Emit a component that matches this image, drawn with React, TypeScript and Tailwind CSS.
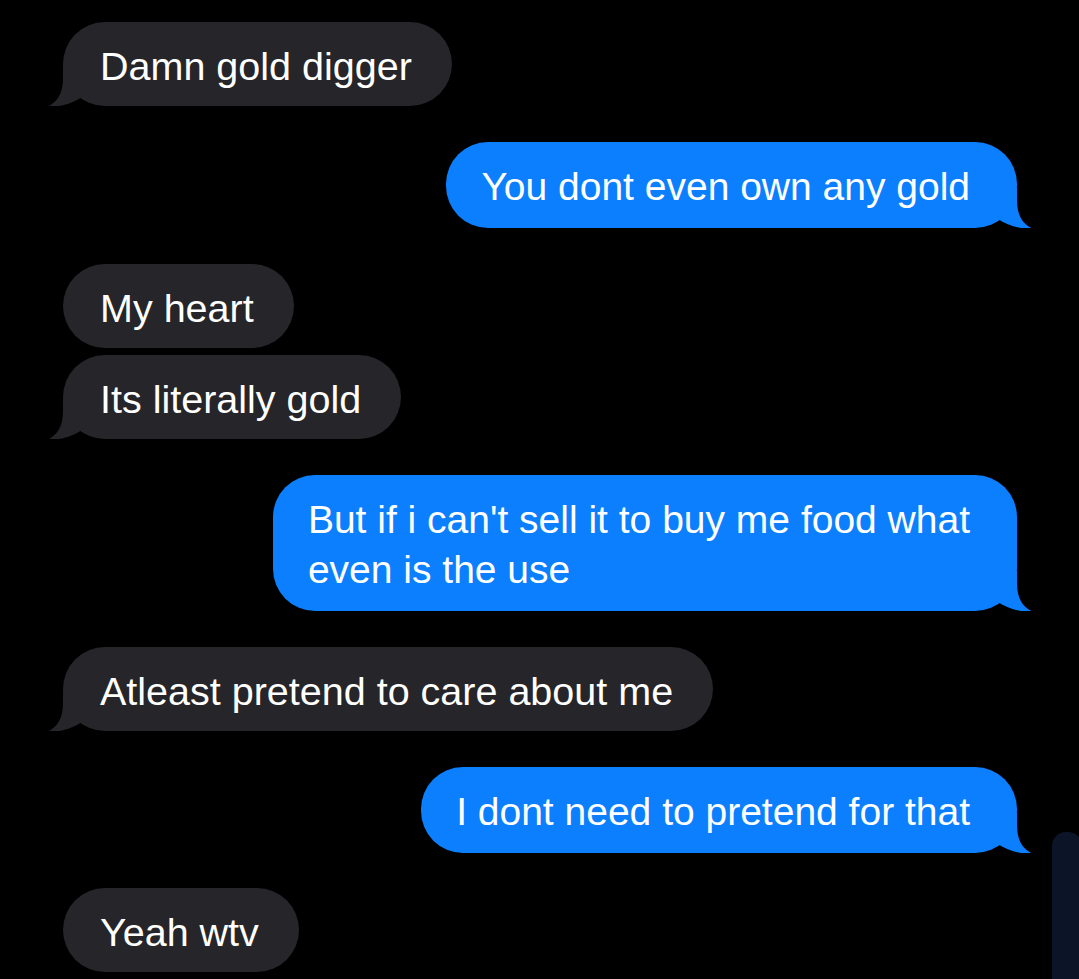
import React from "react";

const GRAY = "#262529";
const BLUE = "#0b7ffe";

function Tail({ side, color }: { side: "left" | "right"; color: string }) {
  const pos = side === "left" ? "left-[-16px]" : "right-[-16px] -scale-x-100";
  return (
    <svg
      className={`absolute bottom-0 ${pos} pointer-events-none`}
      width="40"
      height="40"
      viewBox="0 0 40 40"
    >
      <path d="M16,0 L16,12 C16,28 10,36 1,40.5 C13,41.5 26,37 35,31 L35,0 Z" fill={color} />
    </svg>
  );
}

function Received({ text, tail, mt }: { text: string; tail?: boolean; mt: string }) {
  return (
    <div className={`flex justify-start pl-[63px] ${mt}`}>
      <div className="relative">
        {tail && <Tail side="left" color={GRAY} />}
        <div className="relative rounded-[42px] bg-[#262529] pl-[37px] pr-[40px] pt-[19px] pb-[15px] text-[39.5px] leading-[50px] text-white whitespace-nowrap">
          {text}
        </div>
      </div>
    </div>
  );
}

function Sent({ children, mt }: { children: React.ReactNode; mt: string }) {
  return (
    <div className={`flex justify-end pr-[62px] ${mt}`}>
      <div className="relative">
        <Tail side="right" color={BLUE} />
        <div className="relative rounded-[42px] bg-[#0b7ffe] pl-[35px] pr-[47px] pt-[20px] pb-[16px] text-[39px] leading-[50px] text-white whitespace-nowrap">
          {children}
        </div>
      </div>
    </div>
  );
}

export default function App() {
  return (
    <div
      className="relative h-[979px] w-[1079px] overflow-hidden bg-black pt-[22px] antialiased"
      style={{ fontFamily: '"Liberation Sans", Arial, sans-serif' }}
    >
      <Received text="Damn gold digger" tail mt="mt-0" />
      <Sent mt="mt-[36px]">You dont even own any gold</Sent>
      <Received text="My heart" mt="mt-[36px]" />
      <Received text="Its literally gold" tail mt="mt-[7px]" />
      <Sent mt="mt-[36px]">
        But if i can't sell it to buy me food what
        <br />
        even is the use
      </Sent>
      <Received text="Atleast pretend to care about me" tail mt="mt-[36px]" />
      <Sent mt="mt-[36px]">I dont need to pretend for that</Sent>
      <Received text="Yeah wtv" mt="mt-[35px]" />
      <div className="absolute left-[1052px] top-[832px] bottom-0 w-[30px] rounded-t-[14px] bg-[#0b1527]" />
    </div>
  );
}
